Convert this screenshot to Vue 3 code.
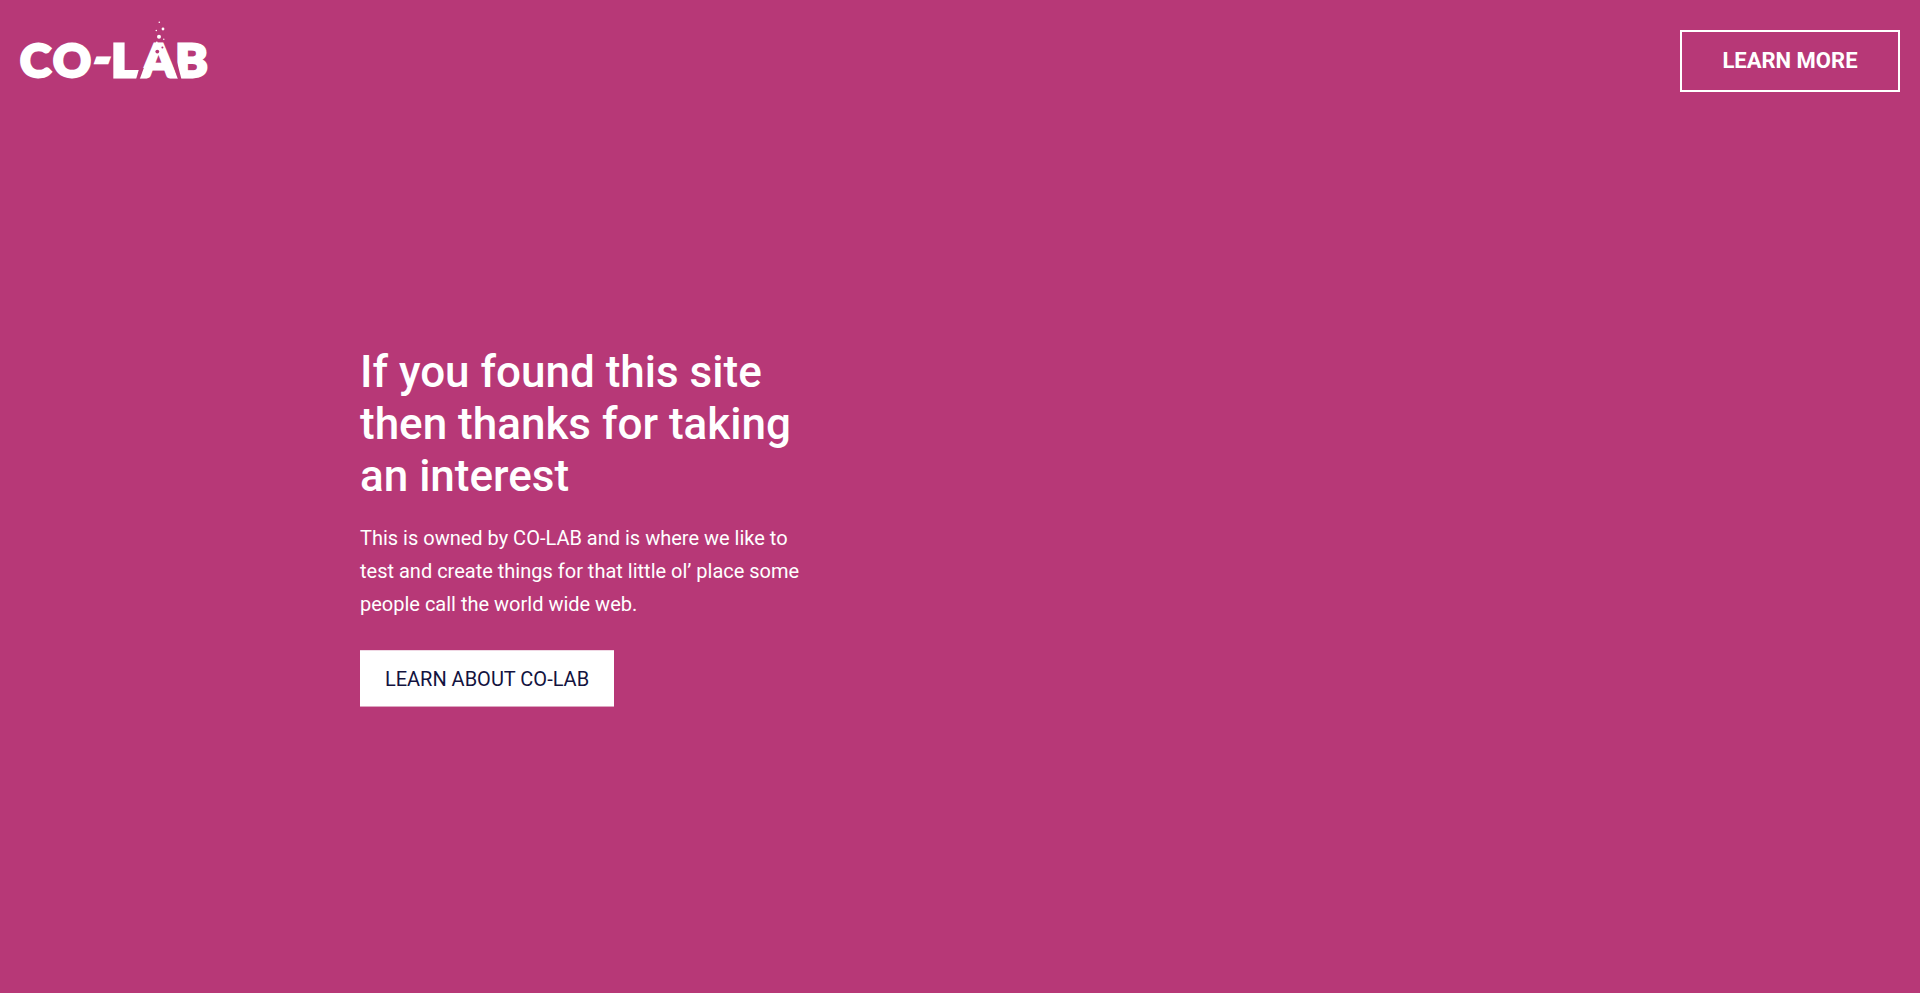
<script setup>
import { ref } from 'vue';

const heading = ref('If you found this site then thanks for taking an interest');

const bubbles = [
  { x: 139.3, y: 2.3, r: 0.8 },
  { x: 143, y: 9, r: 1.4 },
  { x: 136.3, y: 10.5, r: 0.8 },
  { x: 139, y: 16.8, r: 2 },
  { x: 143.8, y: 19.3, r: 0.7 },
  { x: 136.8, y: 22.5, r: 0.9 },
];

const holes = [
  { x: 137.3, y: 31.6, r: 1.9 },
  { x: 142.4, y: 27.5, r: 1 },
];

// slanted gaps on both sides of the A
const cuts = ['119.3,48 116,59.5 119.6,59.5 123.8,48', '151.5,40 156.5,40 161.5,59.5 158,59.5'];
</script>

<template>
  <div class="page">
    <header class="page__header">
      <a class="logo" href="#" aria-label="CO-LAB">
        <svg class="logo__svg" width="190" height="62" viewBox="0 0 190 62">
          <g class="logo__letters">
            <text x="0" y="56.5" textLength="31" lengthAdjust="spacingAndGlyphs">C</text>
            <text x="33" y="56.5" textLength="38" lengthAdjust="spacingAndGlyphs">O</text>
            <text transform="translate(69 54) skewX(-20)">-</text>
            <text x="91" y="56.5" textLength="27.5" lengthAdjust="spacingAndGlyphs">L</text>
            <text x="121.5" y="56.5" textLength="34" lengthAdjust="spacingAndGlyphs">A</text>
            <text x="155.2" y="56.5" textLength="32.5" lengthAdjust="spacingAndGlyphs">B</text>
          </g>
          <polygon v-for="points in cuts" :key="points" class="logo__hole" :points="points" />
          <circle v-for="(b, i) in bubbles" :key="`b${i}`" class="logo__bubble" :cx="b.x" :cy="b.y" :r="b.r" />
          <circle v-for="(h, i) in holes" :key="`h${i}`" class="logo__hole" :cx="h.x" :cy="h.y" :r="h.r" />
        </svg>
      </a>
      <a class="btn btn--outline" href="#">Learn more</a>
    </header>

    <main class="page__main">
      <section class="intro">
        <h1 class="intro__title">{{ heading }}</h1>
        <p class="intro__text">
          This is owned by CO-LAB and is where we like to test and create things for that little ol’ place some people
          call the world wide web.
        </p>
        <a class="btn btn--solid" href="#">Learn about CO-LAB</a>
      </section>
    </main>
  </div>
</template>

<style>
body {
  margin: 0;
  background: #b73877;
}
</style>

<style scoped>
.page {
  min-height: 100vh;
  box-sizing: border-box;
  background: #b73877;
  color: #fff;
  font-family: Roboto, 'Liberation Sans', sans-serif;
}

.page__header {
  display: flex;
  justify-content: space-between;
  align-items: flex-start;
  height: 122px;
  padding: 20px 20px 0;
  box-sizing: border-box;
}

.logo {
  display: block;
}

.logo__svg {
  display: block;
  overflow: visible;
}

.logo__letters {
  fill: #fff;
  stroke: #fff;
  stroke-width: 2.8;
  font-family: Lato, sans-serif;
  font-size: 45px;
  font-weight: 900;
}

.logo__bubble {
  fill: #fff;
}

.logo__hole {
  fill: #b73877;
}

.btn {
  display: inline-flex;
  justify-content: center;
  align-items: center;
  box-sizing: border-box;
  text-decoration: none;
  text-transform: uppercase;
  white-space: nowrap;
}

.btn--outline {
  width: 220px;
  height: 62px;
  margin-top: 10px;
  padding-bottom: 2px;
  border: 2px solid #fff;
  color: #fff;
  font-size: 22px;
  font-weight: 700;
}

.btn--solid {
  width: 254px;
  height: 57px;
  border-top: 1px solid #f0d8e4;
  border-bottom: 1px solid #dda5c0;
  background: #fff;
  color: #131340;
  font-size: 20px;
}

.page__main {
  max-width: 1200px;
  margin: 0 auto;
  padding-top: 224px;
}

.intro {
  width: 450px;
}

.intro__title {
  margin: 0;
  font-size: 44px;
  font-weight: 500;
  line-height: 52px;
}

.intro__text {
  margin: 20px 0 29px;
  font-size: 20px;
  line-height: 33px;
}
</style>
